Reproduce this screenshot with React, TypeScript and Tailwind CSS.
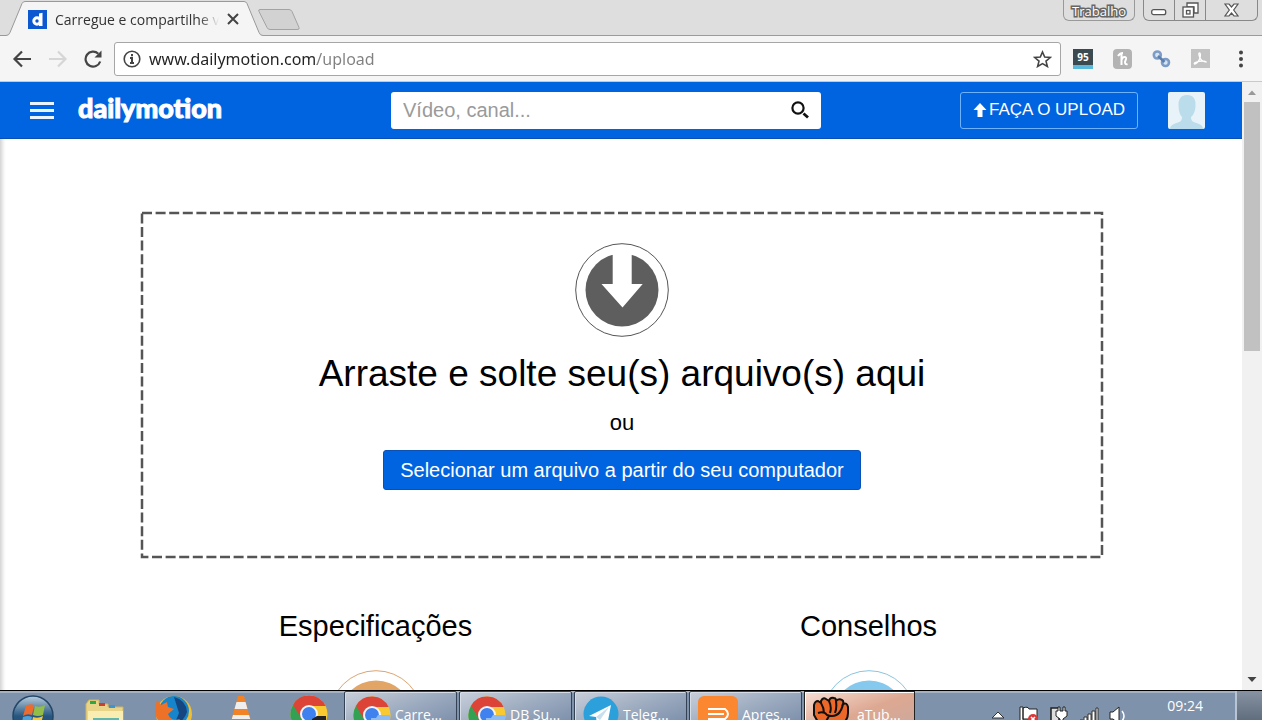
import type { ReactNode } from 'react';

function TabStrip() {
  return (
    <div className="relative flex h-9 shrink-0 items-start justify-between border-b border-[#9b9b9b] bg-[#dedede]">
      <svg className="absolute left-0 top-0" width="304" height="36" fill="none" aria-hidden="true">
        <path d="M0 35.500h6q3 0 4-3L22 3.500q1-2 3-2h219q2 0 3 2l12 29q1 3 4 3V36H0z" fill="#f5f5f5" />
        <path d="M0 35.500h6q3 0 4-3L22 3.500q1-2 3-2h219q2 0 3 2l12 29q1 3 4 3" stroke="#999" />
        <path d="M260 9.500h29q2 0 3 2l7 16q1 2-2 2h-27q-2 0-3-2l-8-16q-1-2 1-2z" fill="#d2d2d2" stroke="#a3a3a3" />
      </svg>
      <div className="relative flex h-9 items-center pl-7 pt-0.5">
        <svg width="19" height="19" viewBox="0 0 19 19" className="mr-2" aria-hidden="true">
          <rect width="19" height="19" fill="#0b58d0" />
          <circle cx="9" cy="11" r="3.200" fill="none" stroke="#fff" strokeWidth="3" />
          <path d="M11 3.500l3.500-.8V16H11z" fill="#fff" />
        </svg>
        <span className="w-[164px] overflow-hidden whitespace-nowrap text-[14px] text-[#333] [mask-image:linear-gradient(to_right,#000_88%,transparent)]">
          Carregue e compartilhe v
        </span>
        <button type="button" aria-label="Fechar guia" className="ml-2 text-[#444]">
          <svg width="12" height="12" viewBox="0 0 12 12" stroke="currentColor" strokeWidth="2">
            <path d="M1 1l10 10M11 1L1 11" />
          </svg>
        </button>
      </div>
      <div className="flex gap-2 pr-1">
        <button
          type="button"
          className="h-[21px] rounded-b-md border border-t-0 border-[#999] px-2 text-[13px] leading-[22px] text-white [paint-order:stroke_fill] [-webkit-text-stroke:3px_#666]"
        >
          Trabalho
        </button>
        <div className="flex h-[21px] divide-x divide-[#888] rounded-b-md border border-t-0 border-[#888]">
          <button type="button" aria-label="Minimizar" className="flex w-[31px] items-center justify-center pt-1">
            <svg width="16" height="7" viewBox="0 0 16 7"><rect x=".7" y=".7" width="14" height="5" rx="2" fill="#fff" stroke="#555" strokeWidth="1.300" /></svg>
          </button>
          <button type="button" aria-label="Restaurar" className="flex w-[31px] items-center justify-center">
            <svg width="17" height="16" viewBox="0 0 17 16" fill="#fff" stroke="#555" strokeWidth="1.300">
              <path d="M5 1h11v10h-4V5H5z" />
              <rect x="1" y="5" width="10.500" height="10" />
              <rect x="4.500" y="8.500" width="3.500" height="3.500" />
            </svg>
          </button>
          <button type="button" aria-label="Fechar" className="flex w-[51px] items-center justify-center">
            <svg width="15" height="14" viewBox="0 0 15 14" fill="#fff" stroke="#555" strokeWidth="1.200">
              <path d="M1 1h4l2.500 3L10 1h4L9.700 7 14 13h-4l-2.500-3L5 13H1l4.300-6z" />
            </svg>
          </button>
        </div>
      </div>
    </div>
  );
}

function AddressBar() {
  return (
    <div className="flex h-[46px] shrink-0 items-center border-b border-[#c9c9c9] bg-[#f5f5f5] pl-3 pr-[18px]">
      <button type="button" aria-label="Voltar" className="mr-4 text-[#444]">
        <svg width="20" height="18" viewBox="0 0 20 18" fill="none" stroke="currentColor" strokeWidth="2.200"><path d="M19 9H3M10 1.500L2.500 9l7.500 7.500" /></svg>
      </button>
      <button type="button" aria-label="Avançar" className="mr-4 text-[#d6d6d6]">
        <svg width="20" height="18" viewBox="0 0 20 18" fill="none" stroke="currentColor" strokeWidth="2.200"><path d="M1 9h16M10 1.500L17.500 9 10 16.500" /></svg>
      </button>
      <button type="button" aria-label="Atualizar" className="mr-3 text-[#444]">
        <svg width="18" height="18" viewBox="0 0 18 18">
          <path d="M16.200 11.500A7.500 7.500 0 1 1 14.300 3.700" fill="none" stroke="currentColor" strokeWidth="2.200" />
          <path d="M17.500.5v7h-7z" fill="currentColor" />
        </svg>
      </button>
      <form className="flex h-[34px] flex-1 items-center rounded-[3px] border border-[#a6a6a6] bg-white px-2" onSubmit={(e) => e.preventDefault()}>
        <svg width="18" height="18" viewBox="0 0 18 18" className="mr-2 text-[#444]" fill="none" stroke="currentColor" aria-hidden="true">
          <circle cx="9" cy="9" r="7.800" strokeWidth="1.600" />
          <path d="M9 4v2.200M7 8h2v5M7 13h4" strokeWidth="2" />
        </svg>
        <input
          type="text"
          aria-label="Endereço"
          defaultValue="www.dailymotion.com/upload"
          className="min-w-0 flex-1 bg-linear-to-r from-[#222] from-[168px] to-[#808080] to-[168px] bg-clip-text font-['Noto_Sans',sans-serif] text-[16px] text-transparent outline-none"
        />
        <button type="button" aria-label="Favoritar" className="text-[#444]">
          <svg width="19" height="18" viewBox="0 0 19 18" fill="none" stroke="currentColor" strokeWidth="1.600">
            <path d="M9.500 2l2.200 5.100 5.600.4-4.300 3.600 1.400 5.400-4.900-2.900-4.900 2.900L6 11.100 1.700 7.500l5.600-.4z" />
          </svg>
        </button>
      </form>
      <div className="ml-3 flex items-center gap-5">
        <button type="button" className="h-5 w-5 border-b-4 border-[#5ab9da] bg-[#3b4a50] text-[10px] font-bold leading-4 text-white">
          95
        </button>
        <button type="button" aria-label="Honey">
          <svg width="19" height="20" viewBox="0 0 19 20">
            <rect width="19" height="20" rx="4" fill="#b3b3b3" />
            <path d="M5 7q2-3 5-3M8.500 4v12M8.500 11q1-3 3-3 2 0 1.500 2l-1 3q0 3 2.500 2" fill="none" stroke="#fff" strokeWidth="2" />
          </svg>
        </button>
        <button type="button" aria-label="Encurtar link">
          <svg width="19" height="18" viewBox="0 0 19 18" fill="#d6e3f1" strokeWidth="2.600">
            <circle cx="5.300" cy="5" r="3.500" stroke="#7d9dc6" />
            <circle cx="13.500" cy="12.500" r="3.500" stroke="#7b9cc6" />
            <path d="M6 6l6.500 6" stroke="#5b7fae" />
          </svg>
        </button>
        <button type="button" aria-label="PDF">
          <svg width="19" height="19" viewBox="0 0 19 19">
            <rect width="19" height="19" fill="#c2c2c2" />
            <path d="M3.500 15q3 0 5.500-6 1-5-.5-5T9 9q2 4 6.500 4-4-2-10 0-3 1-2 2z" fill="none" stroke="#fff" strokeWidth="1.300" />
          </svg>
        </button>
        <button type="button" aria-label="Menu" className="ml-2">
          <svg width="6" height="18" viewBox="0 0 6 18" fill="#444"><circle cx="3" cy="2.500" r="2" /><circle cx="3" cy="9" r="2" /><circle cx="3" cy="15.500" r="2" /></svg>
        </button>
      </div>
    </div>
  );
}

function SiteHeader() {
  return (
    <header className="flex h-[57px] items-center border-b border-[#0b4fb5] bg-[#0064e1] pr-[37px] font-['Liberation_Sans',Arial,sans-serif]">
      <div className="flex w-[391px] items-center gap-6 pl-[30px]">
        <button type="button" aria-label="Abrir menu" className="flex w-6 flex-col gap-1">
          <span className="h-[3px] bg-[#eaf4ff]" />
          <span className="h-[3px] bg-[#eaf4ff]" />
          <span className="h-[3px] bg-[#eaf4ff]" />
        </button>
        <a href="#inicio" className="pb-1 font-[Lato,sans-serif] text-[27px] font-black leading-8 text-white [-webkit-text-stroke:1px_white]">
          dailymotion
        </a>
      </div>
      <form className="flex h-[37px] max-w-[430px] flex-1 items-center rounded-[3px] bg-white px-3" onSubmit={(e) => e.preventDefault()}>
        <input
          type="search"
          aria-label="Buscar"
          placeholder="Vídeo, canal..."
          className="min-w-0 flex-1 text-[20px] outline-none placeholder:text-[#9a9a9a]"
        />
        <button type="submit" aria-label="Pesquisar">
          <svg width="18" height="18" viewBox="0 0 18 18" fill="none" stroke="#111" strokeWidth="2.200">
            <circle cx="7" cy="7" r="5.600" />
            <path d="M12.500 12.500l4.500 4" strokeWidth="2.800" />
          </svg>
        </button>
      </form>
      <button type="button" className="ml-auto flex h-[37px] items-center gap-0.5 rounded-[3px] border border-[#6eb2ff] px-3 text-[17px] text-white">
        <svg width="14" height="14" viewBox="0 0 14 14" fill="#fff" aria-hidden="true"><path d="M7 0l6.500 7H9.500V14h-5V7H.5z" /></svg>
        FAÇA O UPLOAD
      </button>
      <button type="button" aria-label="Minha conta" className="ml-[30px] overflow-hidden rounded-[2px] bg-[#e8f3f9]">
        <svg width="37" height="37" viewBox="0 0 37 37" fill="#bbdcea">
          <path d="M19 3c6 0 9 4 8.500 10 0 6-2 10-4.500 12 0 5 3 5 8 7 3 1 4 3 4 5H2c0-2 1-4 4-5 5-2 8-2 8-7-2-2-3.500-6-3.500-12C10.500 7 13 3 19 3z" />
        </svg>
      </button>
    </header>
  );
}

function DropZone() {
  return (
    <section className="relative flex h-[346px] flex-col items-center pt-[31px]">
      <svg className="pointer-events-none absolute inset-0 size-full p-px" overflow="visible" aria-hidden="true">
        <rect width="100%" height="100%" fill="none" stroke="#555" strokeWidth="2.500" strokeDasharray="10 3.600" />
      </svg>
      <svg width="94" height="94" viewBox="0 0 94 94" aria-hidden="true">
        <circle cx="47" cy="47" r="46.300" fill="none" stroke="#555" />
        <circle cx="47" cy="47" r="36.500" fill="#5e5e5e" />
        <path d="M37.700 9h19v32h11L47.500 64.500 26.500 41h11.200z" fill="#fff" />
      </svg>
      <h1 className="mt-3 text-[37px] leading-[50px]">Arraste e solte seu(s) arquivo(s) aqui</h1>
      <p className="mt-2 text-[22px] leading-8">ou</p>
      <button type="button" className="mt-[11px] h-10 rounded-[3px] border border-[#0b50b4] bg-[#0064e1] px-4 text-[20px] leading-9 text-white">
        Selecionar um arquivo a partir do seu computador
      </button>
    </section>
  );
}

function InfoColumn({ title, stroke, fill }: { title: string; stroke: string; fill: string }) {
  return (
    <section className="flex flex-col items-center">
      <h2 className="text-[29px] leading-10">{title}</h2>
      <svg width="94" height="94" viewBox="0 0 94 94" className="mt-6" aria-hidden="true">
        <circle cx="47" cy="47" r="46.300" fill="none" stroke={stroke} />
        <circle cx="47" cy="47" r="36.500" fill={fill} />
      </svg>
    </section>
  );
}

function Scrollbar() {
  return (
    <div className="flex w-5 shrink-0 flex-col items-center bg-[#f1f1f1]" aria-hidden="true">
      <svg width="20" height="20" viewBox="0 0 20 20"><path d="M6 13l4-4.500 4 4.500z" fill="#999" /></svg>
      <div className="h-[41%] w-4 bg-[#c1c1c1]" />
      <svg width="20" height="20" viewBox="0 0 20 20" className="mt-auto"><path d="M5.500 7h9L10 12z" fill="#444" /></svg>
    </div>
  );
}

function ChromeIcon({ overlay }: { overlay: ReactNode }) {
  return (
    <svg width="38" height="38" viewBox="0 0 38 38" className="shrink-0" aria-hidden="true">
      <circle cx="19" cy="19" r="18.500" fill="#f8c931" />
      <path d="M19 19L3 9.700A18.500 18.500 0 0 0 19 37.500l8-14z" fill="#33a152" />
      <path d="M3 9.700A18.500 18.500 0 0 1 35.600 11H19v8l-8 4z" fill="#dc4437" />
      <circle cx="19" cy="19" r="9" fill="#f4f4f4" />
      <circle cx="19" cy="19" r="7" fill="#3f81ee" />
      {overlay}
    </svg>
  );
}

const windowOverlay = <path d="M18 38V22h5l2-3h12v19z" fill="#8dbcf5" />;
const profileOverlay = (
  <>
    <path d="M22 38V24l5-3h9v17z" fill="#222" />
    <path d="M25 25h10l-2 3h-6z" fill="#d6c98a" />
  </>
);

function TelegramIcon() {
  return (
    <svg width="36" height="36" viewBox="0 0 36 36" className="shrink-0" aria-hidden="true">
      <circle cx="18" cy="18" r="17.500" fill="#2ba0da" />
      <path d="M6 20L28 9l-4 21-7-6-3 4-1-7z" fill="#fff" />
      <path d="M13 21l13-10-9 13z" fill="#c9dfee" />
    </svg>
  );
}

function PreziIcon() {
  return (
    <svg width="40" height="40" viewBox="0 0 40 40" className="shrink-0" aria-hidden="true">
      <rect width="40" height="40" rx="6" fill="#fb8730" />
      <path d="M10 13h17q6 5 0 10H10M10 18h16" fill="none" stroke="#fff" strokeWidth="2" />
    </svg>
  );
}

function FistIcon() {
  return (
    <svg width="36" height="36" viewBox="0 0 36 36" className="shrink-0" aria-hidden="true">
      <path d="M1 19V9q1-4 4-4l3 2V5q2-4 5-2l3 2q1-4 5-3 2 0 2 3 3-3 6-1 2 1 1 4 4-2 5 3v6q0 7-6 11l-5 10H12L5 26z" fill="#ed6828" stroke="#111" strokeWidth="2" />
      <path d="M8 7q3 5 3 10M16 5q3 6 1 12M23 5q1 7-1 12M30 8q-1 6-5 10M5 17q6-2 9 2 8 3 13-3M11 29l5-9" fill="none" stroke="#111" strokeWidth="2" />
    </svg>
  );
}

const windows: { label: string; icon: ReactNode }[] = [
  { label: 'Carre...', icon: <ChromeIcon overlay={windowOverlay} /> },
  { label: 'DB Su...', icon: <ChromeIcon overlay={windowOverlay} /> },
  { label: 'Teleg...', icon: <TelegramIcon /> },
  { label: 'Apres...', icon: <PreziIcon /> },
];

function Taskbar() {
  return (
    <footer className="flex h-[30px] shrink-0 items-start overflow-hidden border-t border-black bg-[#7f92ab] shadow-[inset_0_2px_0_#a3b1c3]">
      <button type="button" aria-label="Iniciar" className="flex w-[71px] justify-start pl-3 pt-1">
        <svg width="42" height="42" viewBox="0 0 42 42">
          <defs>
            <linearGradient id="orb" x2="0" y2="1">
              <stop stopColor="#b9cddd" />
              <stop offset=".5" stopColor="#275780" />
              <stop offset="1" stopColor="#174a78" />
            </linearGradient>
          </defs>
          <circle cx="21" cy="21" r="20" fill="url(#orb)" stroke="#234668" strokeWidth="1.500" />
          <path d="M14 11q4-3 8-1l-2 10q-5-2-9 1z" fill="#ee6b2e" />
          <path d="M23 11q5 2 10-1l-2 10q-5 2-10 0z" fill="#91bd48" />
          <path d="M11 22q5-2 9 0l-2 10q-4-2-9 0z" fill="#4aa1dd" />
          <path d="M21 22q5 2 10-1l-3 11q-5 2-9 0z" fill="#f8c837" />
        </svg>
      </button>
      <button type="button" aria-label="Explorador" className="flex w-[68px] justify-center pt-2">
        <svg width="40" height="36" viewBox="0 0 40 36">
          <path d="M1 5l3-4h10v4h9v3h15v28H1z" fill="#e9d58a" stroke="#cfb460" />
          <path d="M3 12h35v24H3z" fill="#f9edb2" />
          <path d="M5 2h6v3H5z" fill="#29a843" />
          <path d="M14 4h6v3h-6z" fill="#cc3f2a" />
          <path d="M24 6h6v3h-6z" fill="#3d94cf" />
          <path d="M8 20h26v16H8z" fill="#d7e7b0" />
          <path d="M8 20h26" stroke="#62b7ac" strokeWidth="2" />
        </svg>
      </button>
      <button type="button" aria-label="Firefox" className="flex w-[68px] justify-center pt-1">
        <svg width="38" height="38" viewBox="0 0 38 38">
          <circle cx="20" cy="19" r="18" fill="#f1bd31" />
          <circle cx="20" cy="16" r="15" fill="#1685cc" />
          <path d="M20 2q12 3 13 15-3 10-13 13l5-12z" fill="#164680" />
          <path d="M3 5l4 5 6-3 1 5 6 2-6 5q3 8 12 5-5 8-12 7Q-4 26 3 5z" fill="#ed7127" />
        </svg>
      </button>
      <button type="button" aria-label="VLC" className="flex w-[68px] justify-center pt-1">
        <svg width="32" height="38" viewBox="0 0 32 38">
          <path d="M13 1h6l7 25H6z" fill="#f18226" />
          <path d="M11.500 7h9l2 7H9.500zM8 20h16l1.500 5h-19z" fill="#eee" />
          <path d="M5 24h22l4 14H1z" fill="#e87924" />
        </svg>
      </button>
      <button type="button" aria-label="Chrome" className="flex w-[68px] justify-center pt-1">
        <ChromeIcon overlay={profileOverlay} />
      </button>
      <div className="ml-px flex gap-0.5">
        {windows.map((w) => (
          <button
            key={w.label}
            type="button"
            className="flex h-11 w-[113px] items-start gap-1 rounded-t-[2px] border border-[#354256] bg-linear-to-br from-[#c8cfda] via-[#99a8bd] to-[#7185a4] pl-2 pt-1 text-[14px] text-white shadow-[inset_1px_1px_0_#d6dde7]"
          >
            {w.icon}
            <span className="whitespace-nowrap pt-2">{w.label}</span>
          </button>
        ))}
        <button
          type="button"
          className="flex h-11 w-[111px] items-start gap-2 border border-[#222] bg-linear-to-br from-[#f7ded4] via-[#dda892] to-[#c9a89f] pl-2 pt-1 text-[14px] text-white shadow-[inset_1px_1px_0_#fff]"
        >
          <FistIcon />
          <span className="whitespace-nowrap pt-2">aTub...</span>
        </button>
      </div>
      <div className="ml-auto flex items-start gap-2.5 pr-10 pt-[15px]">
        <svg width="14" height="14" viewBox="0 0 14 14" className="mr-1 mt-1" aria-hidden="true"><path d="M1 8l6-6 6 6z" fill="#fff" stroke="#333" /></svg>
        <svg width="20" height="20" viewBox="0 0 20 20" aria-hidden="true">
          <path d="M1 1h3v17H1zM4 2q5-2 6 1h8v10H4z" fill="#fff" stroke="#222" />
          <circle cx="14" cy="13" r="5" fill="#dc3838" />
          <path d="M12 11l4 4M16 11l-4 4" stroke="#fff" strokeWidth="1.500" />
        </svg>
        <svg width="20" height="20" viewBox="0 0 20 20" aria-hidden="true">
          <path d="M2 2h8v16H2z" fill="#ddd" stroke="#222" strokeWidth="1.500" />
          <path d="M9 1v4H7v5l4 3v6h3v-6l4-3V5h-2V1h-2v4h-3V1z" fill="#fff" stroke="#222" />
        </svg>
        <svg width="20" height="20" viewBox="0 0 20 20" fill="#fff" stroke="#333" aria-hidden="true">
          <path d="M1 14h3v6H1zM5 11h3v9H5zM9 8h3v12H9zM13 5h3v15h-3zM17 2h2v18h-2z" />
        </svg>
        <svg width="18" height="20" viewBox="0 0 18 20" aria-hidden="true">
          <path d="M1 6h3l6-5v17l-6-5H1z" fill="#fff" stroke="#222" />
          <path d="M13 5q4 5 0 10" fill="none" stroke="#fff" strokeWidth="1.500" />
        </svg>
      </div>
      <time className="pr-8 pt-[5px] text-[14px] leading-5 text-white">09:24</time>
      <button type="button" aria-label="Mostrar área de trabalho" className="h-11 w-[27px] border-l-2 border-[#b9c5d3] bg-linear-to-b from-[#8793a2] to-[#4d5b6c]" />
    </footer>
  );
}

export default function App() {
  return (
    <div className="flex h-screen flex-col overflow-hidden bg-white font-['Open_Sans','Noto_Sans',sans-serif] text-black">
      <TabStrip />
      <AddressBar />
      <div className="flex min-h-0 flex-1">
        <div className="min-w-0 flex-1 overflow-hidden">
          <SiteHeader />
          <main className="h-full pl-[141px] pr-[139px] pt-[73px] font-['Liberation_Sans',Arial,sans-serif] shadow-[inset_5px_0_4px_-3px_#ccc]">
            <DropZone />
            <div className="mt-12 grid grid-cols-2 gap-6">
              <InfoColumn title="Especificações" stroke="#dda471" fill="#e2a565" />
              <InfoColumn title="Conselhos" stroke="#89c5df" fill="#86c9ee" />
            </div>
          </main>
        </div>
        <Scrollbar />
      </div>
      <Taskbar />
    </div>
  );
}
